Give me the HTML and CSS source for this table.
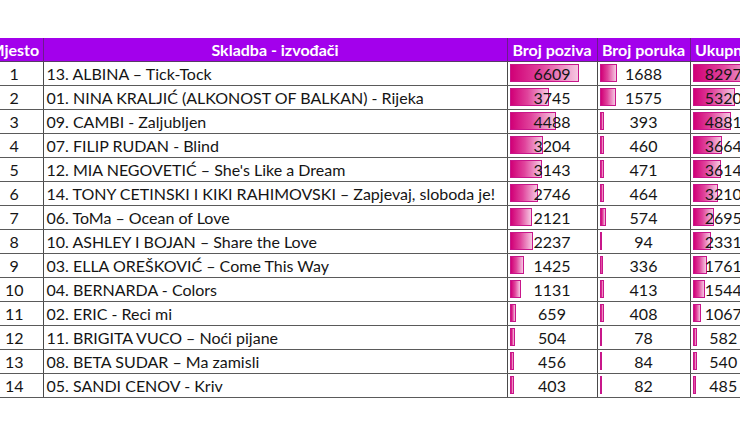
FILE: index.html
```html
<!DOCTYPE html>
<html lang="hr">
<head>
<meta charset="utf-8">
<title>Rezultati</title>
<link rel="stylesheet" href="styles.css">
</head>
<body>
<div class="sheet">
<table class="results">
<colgroup>
<col class="c-rank"><col class="c-song"><col class="c-calls"><col class="c-msgs"><col class="c-total">
</colgroup>
<thead>
<tr><th>Mjesto</th><th>Skladba - izvođači</th><th>Broj poziva</th><th>Broj poruka</th><th>Ukupno</th></tr>
</thead>
<tbody>
<tr><td class="rank">1</td><td class="song">13. ALBINA – Tick-Tock</td><td class="num"><span class="bar" style="width:69px"></span><span class="val">6609</span></td><td class="num"><span class="bar" style="width:17.6px"></span><span class="val">1688</span></td><td class="num tot"><span class="bar" style="width:66px"></span><span class="val">8297</span></td></tr>
<tr><td class="rank">2</td><td class="song">01. NINA KRALJIĆ (ALKONOST OF BALKAN) - Rijeka</td><td class="num"><span class="bar" style="width:39.1px"></span><span class="val">3745</span></td><td class="num"><span class="bar" style="width:16.4px"></span><span class="val">1575</span></td><td class="num tot"><span class="bar" style="width:42.3px"></span><span class="val">5320</span></td></tr>
<tr><td class="rank">3</td><td class="song">09. CAMBI - Zaljubljen</td><td class="num"><span class="bar" style="width:46.9px"></span><span class="val">4488</span></td><td class="num"><span class="bar" style="width:4.1px"></span><span class="val">393</span></td><td class="num tot"><span class="bar" style="width:38.8px"></span><span class="val">4881</span></td></tr>
<tr><td class="rank">4</td><td class="song">07. FILIP RUDAN - Blind</td><td class="num"><span class="bar" style="width:33.5px"></span><span class="val">3204</span></td><td class="num"><span class="bar" style="width:4.8px"></span><span class="val">460</span></td><td class="num tot"><span class="bar" style="width:29.1px"></span><span class="val">3664</span></td></tr>
<tr><td class="rank">5</td><td class="song">12. MIA NEGOVETIĆ – She's Like a Dream</td><td class="num"><span class="bar" style="width:32.8px"></span><span class="val">3143</span></td><td class="num"><span class="bar" style="width:4.9px"></span><span class="val">471</span></td><td class="num tot"><span class="bar" style="width:28.7px"></span><span class="val">3614</span></td></tr>
<tr><td class="rank">6</td><td class="song">14. TONY CETINSKI I KIKI RAHIMOVSKI – Zapjevaj, sloboda je!</td><td class="num"><span class="bar" style="width:28.7px"></span><span class="val">2746</span></td><td class="num"><span class="bar" style="width:4.8px"></span><span class="val">464</span></td><td class="num tot"><span class="bar" style="width:25.5px"></span><span class="val">3210</span></td></tr>
<tr><td class="rank">7</td><td class="song">06. ToMa – Ocean of Love</td><td class="num"><span class="bar" style="width:22.1px"></span><span class="val">2121</span></td><td class="num"><span class="bar" style="width:6px"></span><span class="val">574</span></td><td class="num tot"><span class="bar" style="width:21.4px"></span><span class="val">2695</span></td></tr>
<tr><td class="rank">8</td><td class="song">10. ASHLEY I BOJAN – Share the Love</td><td class="num"><span class="bar" style="width:23.4px"></span><span class="val">2237</span></td><td class="num"><span class="bar" style="width:2px"></span><span class="val">94</span></td><td class="num tot"><span class="bar" style="width:18.5px"></span><span class="val">2331</span></td></tr>
<tr><td class="rank">9</td><td class="song">03. ELLA OREŠKOVIĆ – Come This Way</td><td class="num"><span class="bar" style="width:14.9px"></span><span class="val">1425</span></td><td class="num"><span class="bar" style="width:3.5px"></span><span class="val">336</span></td><td class="num tot"><span class="bar" style="width:14px"></span><span class="val">1761</span></td></tr>
<tr><td class="rank">10</td><td class="song">04. BERNARDA - Colors</td><td class="num"><span class="bar" style="width:11.8px"></span><span class="val">1131</span></td><td class="num"><span class="bar" style="width:4.3px"></span><span class="val">413</span></td><td class="num tot"><span class="bar" style="width:12.3px"></span><span class="val">1544</span></td></tr>
<tr><td class="rank">11</td><td class="song">02. ERIC - Reci mi</td><td class="num"><span class="bar" style="width:6.9px"></span><span class="val">659</span></td><td class="num"><span class="bar" style="width:4.3px"></span><span class="val">408</span></td><td class="num tot"><span class="bar" style="width:8.5px"></span><span class="val">1067</span></td></tr>
<tr><td class="rank">12</td><td class="song">11. BRIGITA VUCO – Noći pijane</td><td class="num"><span class="bar" style="width:5.3px"></span><span class="val">504</span></td><td class="num"><span class="bar" style="width:2px"></span><span class="val">78</span></td><td class="num tot"><span class="bar" style="width:4.6px"></span><span class="val">582</span></td></tr>
<tr><td class="rank">13</td><td class="song">08. BETA SUDAR – Ma zamisli</td><td class="num"><span class="bar" style="width:4.8px"></span><span class="val">456</span></td><td class="num"><span class="bar" style="width:2px"></span><span class="val">84</span></td><td class="num tot"><span class="bar" style="width:4.3px"></span><span class="val">540</span></td></tr>
<tr><td class="rank">14</td><td class="song">05. SANDI CENOV - Kriv</td><td class="num"><span class="bar" style="width:4.2px"></span><span class="val">403</span></td><td class="num"><span class="bar" style="width:2px"></span><span class="val">82</span></td><td class="num tot"><span class="bar" style="width:3.9px"></span><span class="val">485</span></td></tr>
</tbody>
</table>
</div>
</body>
</html>
```

FILE: styles.css
```css
html, body {
  margin: 0;
  padding: 0;
  background: #ffffff;
  overflow: hidden;
}
body {
  width: 740px;
  height: 438px;
  font-family: Lato, "Open Sans", sans-serif;
  color: #151515;
}
.sheet {
  padding-top: 38px;
  margin-left: -14px;
  width: 780px;
}
.results {
  border-collapse: collapse;
  table-layout: fixed;
  width: 770px;
  font-size: 16px;
}
.c-rank { width: 57px; }
.c-song { width: 464px; }
.c-calls { width: 90px; }
.c-msgs { width: 93px; }
.c-total { width: 66px; }

.results th {
  height: 23px;
  padding: 0;
  background: #a300ec;
  color: #ffffff;
  font-weight: 700;
  text-align: center;
  border-left: 1px solid #6d1a8c;
  border-bottom: 1px solid #5a3a66;
  white-space: nowrap;
  overflow: hidden;
}
.results th:first-child { border-left: none; }

.results td {
  height: 23px;
  padding: 0;
  border-left: 1px solid #4a4a4a;
  border-bottom: 1px solid #5a5a5a;
  white-space: nowrap;
  overflow: hidden;
}
.results td:first-child { border-left: none; }
.rank { text-align: center; }
.song { padding-left: 3px !important; text-align: left; }
.num {
  position: relative;
  text-align: center;
}
.bar {
  position: absolute;
  left: 2px;
  top: 2px;
  bottom: 3px;
  box-sizing: border-box;
  border: 1px solid #c8168a;
  background: linear-gradient(to right, #d10077 0%, #e0449c 45%, #f6c8e2 100%);
}
.val {
  position: relative;
}
```
